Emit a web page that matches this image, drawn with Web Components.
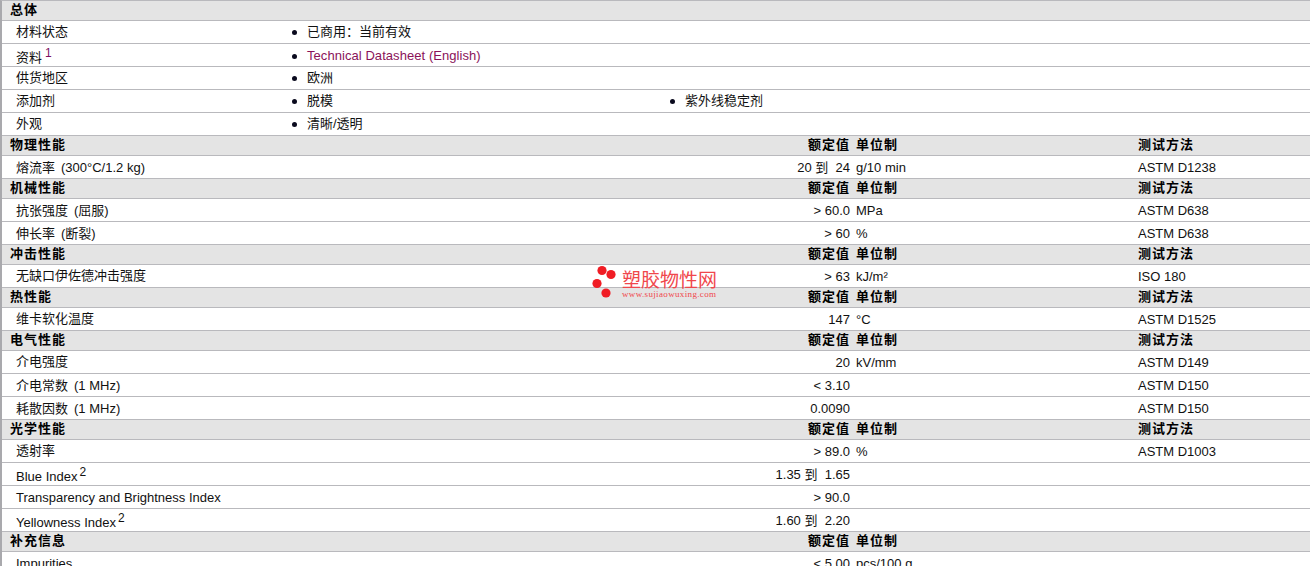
<!DOCTYPE html>
<html lang="zh">
<head>
<meta charset="utf-8">
<title>塑胶物性</title>
<style>
    html, body { margin: 0; height: 566px; overflow: hidden; background: #fff; }
    body { font: 13px/15px "Liberation Sans", "Noto Sans CJK SC", sans-serif; color: #111; }
</style>
</head>
<body>
<spec-table>
    <spec-head label="总体" plain></spec-head>
    <info-row name="材料状态"><span>已商用：当前有效</span></info-row>
    <info-row name="资料" note="1"><a>Technical Datasheet (English)</a></info-row>
    <info-row name="供货地区"><span>欧洲</span></info-row>
    <info-row name="添加剂"><span>脱模</span><span>紫外线稳定剂</span></info-row>
    <info-row name="外观"><span>清晰/透明</span></info-row>

    <spec-head label="物理性能"></spec-head>
    <spec-row name="熔流率" cond="(300°C/1.2 kg)" value="20 到  24" unit="g/10 min" method="ASTM D1238"></spec-row>

    <spec-head label="机械性能"></spec-head>
    <spec-row name="抗张强度" cond="(屈服)" value="> 60.0" unit="MPa" method="ASTM D638"></spec-row>
    <spec-row name="伸长率" cond="(断裂)" value="> 60" unit="%" method="ASTM D638"></spec-row>

    <spec-head label="冲击性能"></spec-head>
    <spec-row cjk name="无缺口伊佐德冲击强度" value="> 63" unit="kJ/m²" method="ISO 180"></spec-row>

    <spec-head label="热性能"></spec-head>
    <spec-row cjk name="维卡软化温度" value="147" unit="°C" method="ASTM D1525"></spec-row>

    <spec-head label="电气性能"></spec-head>
    <spec-row cjk name="介电强度" value="20" unit="kV/mm" method="ASTM D149"></spec-row>
    <spec-row name="介电常数" cond="(1 MHz)" value="< 3.10" method="ASTM D150"></spec-row>
    <spec-row name="耗散因数" cond="(1 MHz)" value="0.0090" method="ASTM D150"></spec-row>

    <spec-head label="光学性能"></spec-head>
    <spec-row cjk name="透射率" value="> 89.0" unit="%" method="ASTM D1003"></spec-row>
    <spec-row name="Blue Index" note="2" value="1.35 到  1.65"></spec-row>
    <spec-row name="Transparency and Brightness Index" value="> 90.0"></spec-row>
    <spec-row name="Yellowness Index" note="2" value="1.60 到  2.20"></spec-row>

    <spec-head label="补充信息" no-method></spec-head>
    <spec-row name="Impurities" value="< 5.00" unit="pcs/100 g"></spec-row>

    <site-mark></site-mark>
</spec-table>

<template id="row-styles">
    <style>
        :host {
            display: grid;
            box-sizing: border-box;
            height: 23px;
            border-bottom: 1px solid #b9b9bd;
            grid-template-columns: 400px 1fr 288px 172px;
            align-items: center;
            padding-left: 14px;
            padding-top: 1px;
            white-space: pre;
        }
        :host([cjk]) .name { padding-bottom: 2px; }
        .cond { margin-left: 6px; }
        sup {
            font-size: 12px;
            line-height: 12px;
            vertical-align: 5px;
            margin-left: 2px;
        }
        .value { text-align: right; }
        .unit { padding-left: 6px; }
    </style>
</template>

<script>
    const rowStyles = document.getElementById('row-styles');

    class SpecTable extends HTMLElement {
        constructor() {
            super();
            this.attachShadow({ mode: 'open' });
            this.shadowRoot.innerHTML = `
                <style>
                    :host {
                        display: block;
                        position: relative;
                        border-top: 1px solid #b9b9bd;
                        border-left: 2px solid #a9a9ad;
                    }
                </style>
                <slot></slot>
            `;
        }
    }

    class SpecHead extends HTMLElement {
        constructor() {
            super();
            this.attachShadow({ mode: 'open' });
            const plain = this.hasAttribute('plain');
            const method = this.hasAttribute('no-method') ? '' : '测试方法';
            this.shadowRoot.innerHTML = `
                <style>
                    :host {
                        display: grid;
                        box-sizing: border-box;
                        height: 20px;
                        background: #e4e4e4;
                        border-bottom: 1px solid #b9b9bd;
                        grid-template-columns: 400px 1fr 288px 172px;
                        align-items: center;
                        padding-left: 8px;
                        padding-bottom: 2px;
                        font-weight: bold;
                        letter-spacing: 1px;
                        color: #000;
                    }
                    .value { text-align: right; }
                    .unit { padding-left: 6px; }
                </style>
                <div>${this.getAttribute('label')}</div>
                <div class="value">${plain ? '' : '额定值'}</div>
                <div class="unit">${plain ? '' : '单位制'}</div>
                <div>${plain ? '' : method}</div>
            `;
        }
    }

    class InfoRow extends HTMLElement {
        constructor() {
            super();
            this.attachShadow({ mode: 'open' });
            const note = this.getAttribute('note');
            this.shadowRoot.innerHTML = `
                <style>
                    :host {
                        display: grid;
                        box-sizing: border-box;
                        height: 23px;
                        border-bottom: 1px solid #b9b9bd;
                        grid-template-columns: 276px 1fr;
                        align-items: center;
                        padding-left: 14px;
                        padding-top: 1px;
                    }
                    :host(:not([note])) .name,
                    :host(:not([note])) .items { padding-bottom: 2px; }
                    sup {
                        font-size: 12px;
                        line-height: 12px;
                        vertical-align: 5px;
                        margin-left: 3px;
                        color: #7a0f62;
                    }
                    .items {
                        display: grid;
                        grid-template-columns: repeat(2, 378px);
                        justify-content: start;
                    }
                    ::slotted(*)::before {
                        content: "";
                        display: inline-block;
                        width: 5px;
                        height: 5px;
                        border-radius: 50%;
                        background: #0a0a1e;
                        margin: 0 10px 1px 0;
                        vertical-align: middle;
                    }
                    ::slotted(a) { color: #8a1259; letter-spacing: 0.06px; }
                </style>
                <div class="name">${this.getAttribute('name')}${note ? `<sup>${note}</sup>` : ''}</div>
                <div class="items"><slot></slot></div>
            `;
        }
    }

    class SpecRow extends HTMLElement {
        constructor() {
            super();
            this.attachShadow({ mode: 'open' });
            this.shadowRoot.appendChild(rowStyles.content.cloneNode(true));
            const cell = (cls, text) => {
                const div = document.createElement('div');
                div.className = cls;
                div.textContent = text || '';
                this.shadowRoot.appendChild(div);
                return div;
            };
            const name = cell('name', this.getAttribute('name'));
            if (this.getAttribute('cond')) {
                const cond = document.createElement('span');
                cond.className = 'cond';
                cond.textContent = this.getAttribute('cond');
                name.appendChild(cond);
            }
            if (this.getAttribute('note')) {
                const sup = document.createElement('sup');
                sup.textContent = this.getAttribute('note');
                name.appendChild(sup);
            }
            cell('value', this.getAttribute('value'));
            cell('unit', this.getAttribute('unit'));
            cell('method', this.getAttribute('method'));
        }
    }

    // watermark sits over the table, so this one is absolute
    class SiteMark extends HTMLElement {
        constructor() {
            super();
            this.attachShadow({ mode: 'open' });
            this.shadowRoot.innerHTML = `
                <style>
                    :host {
                        position: absolute;
                        left: 590px;
                        top: 264px;
                        display: flex;
                        gap: 4px;
                        color: #f0474c;
                    }
                    svg { display: block; }
                    .title { font-size: 19px; line-height: 18px; margin-top: 7px; }
                    .url {
                        font: 9px/10px "Liberation Serif", serif;
                        letter-spacing: 0.35px;
                        margin-top: -1px;
                    }
                </style>
                <svg width="26" height="34" viewBox="0 0 26 34">
                    <g fill="#f01c24">
                        <circle cx="10" cy="5.5" r="4.6"/>
                        <circle cx="19" cy="9.5" r="4.6"/>
                        <circle cx="5" cy="18.5" r="4.6"/>
                        <circle cx="14" cy="28" r="4.6"/>
                    </g>
                </svg>
                <div>
                    <div class="title">塑胶物性网</div>
                    <div class="url">www.sujiaowuxing.com</div>
                </div>
            `;
        }
    }

    customElements.define('spec-table', SpecTable);
    customElements.define('spec-head', SpecHead);
    customElements.define('info-row', InfoRow);
    customElements.define('spec-row', SpecRow);
    customElements.define('site-mark', SiteMark);
</script>
</body>
</html>
